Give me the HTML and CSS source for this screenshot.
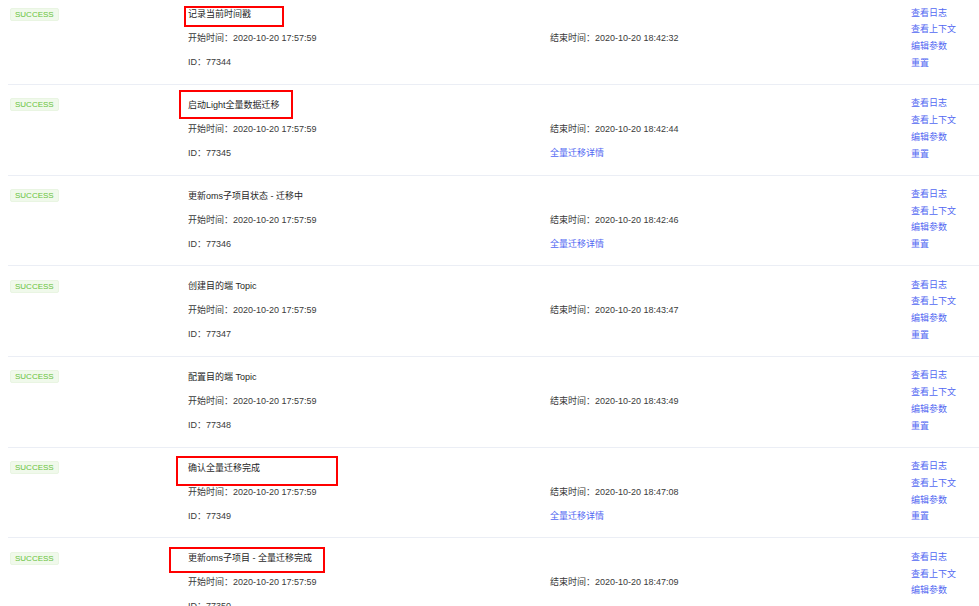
FILE: index.html
```html
<!DOCTYPE html>
<html lang="zh-CN">
<head>
    <meta charset="UTF-8">
    <meta name="viewport" content="width=device-width, initial-scale=1.0">
    <title>任务步骤</title>
    <link rel="stylesheet" href="styles.css">
</head>
<body>
    <div class="step-list">
        <div class="step-row">
            <div class="col-status"><span class="tag-success">SUCCESS</span></div>
            <div class="col-main">
                <p class="step-title">记录当前时间戳</p>
                <p>开始时间：2020-10-20 17:57:59</p>
                <p>ID：77344</p>
            </div>
            <div class="col-end">
                <p>&nbsp;</p>
                <p>结束时间：2020-10-20 18:42:32</p>
            </div>
            <div class="col-actions">
                <a href="#">查看日志</a>
                <a href="#">查看上下文</a>
                <a href="#">编辑参数</a>
                <a href="#">重置</a>
            </div>
            <div class="mark mark-1"></div>
        </div>

        <div class="step-row">
            <div class="col-status"><span class="tag-success">SUCCESS</span></div>
            <div class="col-main">
                <p class="step-title">启动Light全量数据迁移</p>
                <p>开始时间：2020-10-20 17:57:59</p>
                <p>ID：77345</p>
            </div>
            <div class="col-end">
                <p>&nbsp;</p>
                <p>结束时间：2020-10-20 18:42:44</p>
                <p><a href="#" class="detail-link">全量迁移详情</a></p>
            </div>
            <div class="col-actions">
                <a href="#">查看日志</a>
                <a href="#">查看上下文</a>
                <a href="#">编辑参数</a>
                <a href="#">重置</a>
            </div>
            <div class="mark mark-2"></div>
        </div>

        <div class="step-row">
            <div class="col-status"><span class="tag-success">SUCCESS</span></div>
            <div class="col-main">
                <p class="step-title">更新oms子项目状态 - 迁移中</p>
                <p>开始时间：2020-10-20 17:57:59</p>
                <p>ID：77346</p>
            </div>
            <div class="col-end">
                <p>&nbsp;</p>
                <p>结束时间：2020-10-20 18:42:46</p>
                <p><a href="#" class="detail-link">全量迁移详情</a></p>
            </div>
            <div class="col-actions">
                <a href="#">查看日志</a>
                <a href="#">查看上下文</a>
                <a href="#">编辑参数</a>
                <a href="#">重置</a>
            </div>
        </div>

        <div class="step-row">
            <div class="col-status"><span class="tag-success">SUCCESS</span></div>
            <div class="col-main">
                <p class="step-title">创建目的端 Topic</p>
                <p>开始时间：2020-10-20 17:57:59</p>
                <p>ID：77347</p>
            </div>
            <div class="col-end">
                <p>&nbsp;</p>
                <p>结束时间：2020-10-20 18:43:47</p>
            </div>
            <div class="col-actions">
                <a href="#">查看日志</a>
                <a href="#">查看上下文</a>
                <a href="#">编辑参数</a>
                <a href="#">重置</a>
            </div>
        </div>

        <div class="step-row">
            <div class="col-status"><span class="tag-success">SUCCESS</span></div>
            <div class="col-main">
                <p class="step-title">配置目的端 Topic</p>
                <p>开始时间：2020-10-20 17:57:59</p>
                <p>ID：77348</p>
            </div>
            <div class="col-end">
                <p>&nbsp;</p>
                <p>结束时间：2020-10-20 18:43:49</p>
            </div>
            <div class="col-actions">
                <a href="#">查看日志</a>
                <a href="#">查看上下文</a>
                <a href="#">编辑参数</a>
                <a href="#">重置</a>
            </div>
        </div>

        <div class="step-row">
            <div class="col-status"><span class="tag-success">SUCCESS</span></div>
            <div class="col-main">
                <p class="step-title">确认全量迁移完成</p>
                <p>开始时间：2020-10-20 17:57:59</p>
                <p>ID：77349</p>
            </div>
            <div class="col-end">
                <p>&nbsp;</p>
                <p>结束时间：2020-10-20 18:47:08</p>
                <p><a href="#" class="detail-link">全量迁移详情</a></p>
            </div>
            <div class="col-actions">
                <a href="#">查看日志</a>
                <a href="#">查看上下文</a>
                <a href="#">编辑参数</a>
                <a href="#">重置</a>
            </div>
            <div class="mark mark-6"></div>
        </div>

        <div class="step-row">
            <div class="col-status"><span class="tag-success">SUCCESS</span></div>
            <div class="col-main">
                <p class="step-title">更新oms子项目 - 全量迁移完成</p>
                <p>开始时间：2020-10-20 17:57:59</p>
                <p>ID：77350</p>
            </div>
            <div class="col-end">
                <p>&nbsp;</p>
                <p>结束时间：2020-10-20 18:47:09</p>
            </div>
            <div class="col-actions">
                <a href="#">查看日志</a>
                <a href="#">查看上下文</a>
                <a href="#">编辑参数</a>
            </div>
            <div class="mark mark-7"></div>
        </div>
    </div>
</body>
</html>
```

FILE: styles.css
```css
html, body {
    height: 100%;
    overflow: hidden;
}
body {
    margin: 0 0 0 8px;
    background-color: #fff;
    font-family: "Liberation Sans", "Noto Sans CJK SC", sans-serif;
    font-size: 9px;
    color: #3a3a3a;
}
p {
    margin: 0;
}
a {
    text-decoration: none;
}

/* list is scrolled a little, first row is cut at the top */
.step-list {
    margin-top: -5.8px;
}
.step-row {
    display: flex;
    position: relative;
    height: 90.7px;
    box-sizing: border-box;
    border-bottom: 1px solid #ebeef5;
}

.col-status {
    width: 170px;
    padding: 13.5px 0 0 2px;
    box-sizing: border-box;
}
.tag-success {
    display: inline-block;
    height: 13px;
    line-height: 11px;
    padding: 0 4px;
    font-size: 8px;
    color: #67c23a;
    background-color: #f0f9eb;
    border: 1px solid #e9f5e2;
    border-radius: 2px;
    box-sizing: border-box;
}

.col-main, .col-end {
    width: 362px;
    padding: 8px 10px 0;
    box-sizing: border-box;
    line-height: 24px;
}
.col-end {
    width: 361px;
}
.step-title {
    color: #1f1f1f;
}
.detail-link {
    color: #5268f2;
}

.col-actions {
    display: flex;
    flex-direction: column;
    align-items: flex-start;
    padding: 10.5px 10px 0;
    line-height: 16.7px;
}
.col-actions a {
    color: #5268f2;
}

/* red annotation boxes drawn over the screenshot */
.mark {
    position: absolute;
    border: 2px solid #f00;
    box-sizing: border-box;
}
.mark-1 {
    left: 176px;
    top: 11.8px;
    width: 100px;
    height: 21px;
}
.mark-2 {
    left: 171px;
    top: 5px;
    width: 114px;
    height: 29px;
}
.mark-6 {
    left: 168px;
    top: 8.4px;
    width: 162px;
    height: 30px;
}
.mark-7 {
    left: 161px;
    top: 8.5px;
    width: 156px;
    height: 26px;
}
```
